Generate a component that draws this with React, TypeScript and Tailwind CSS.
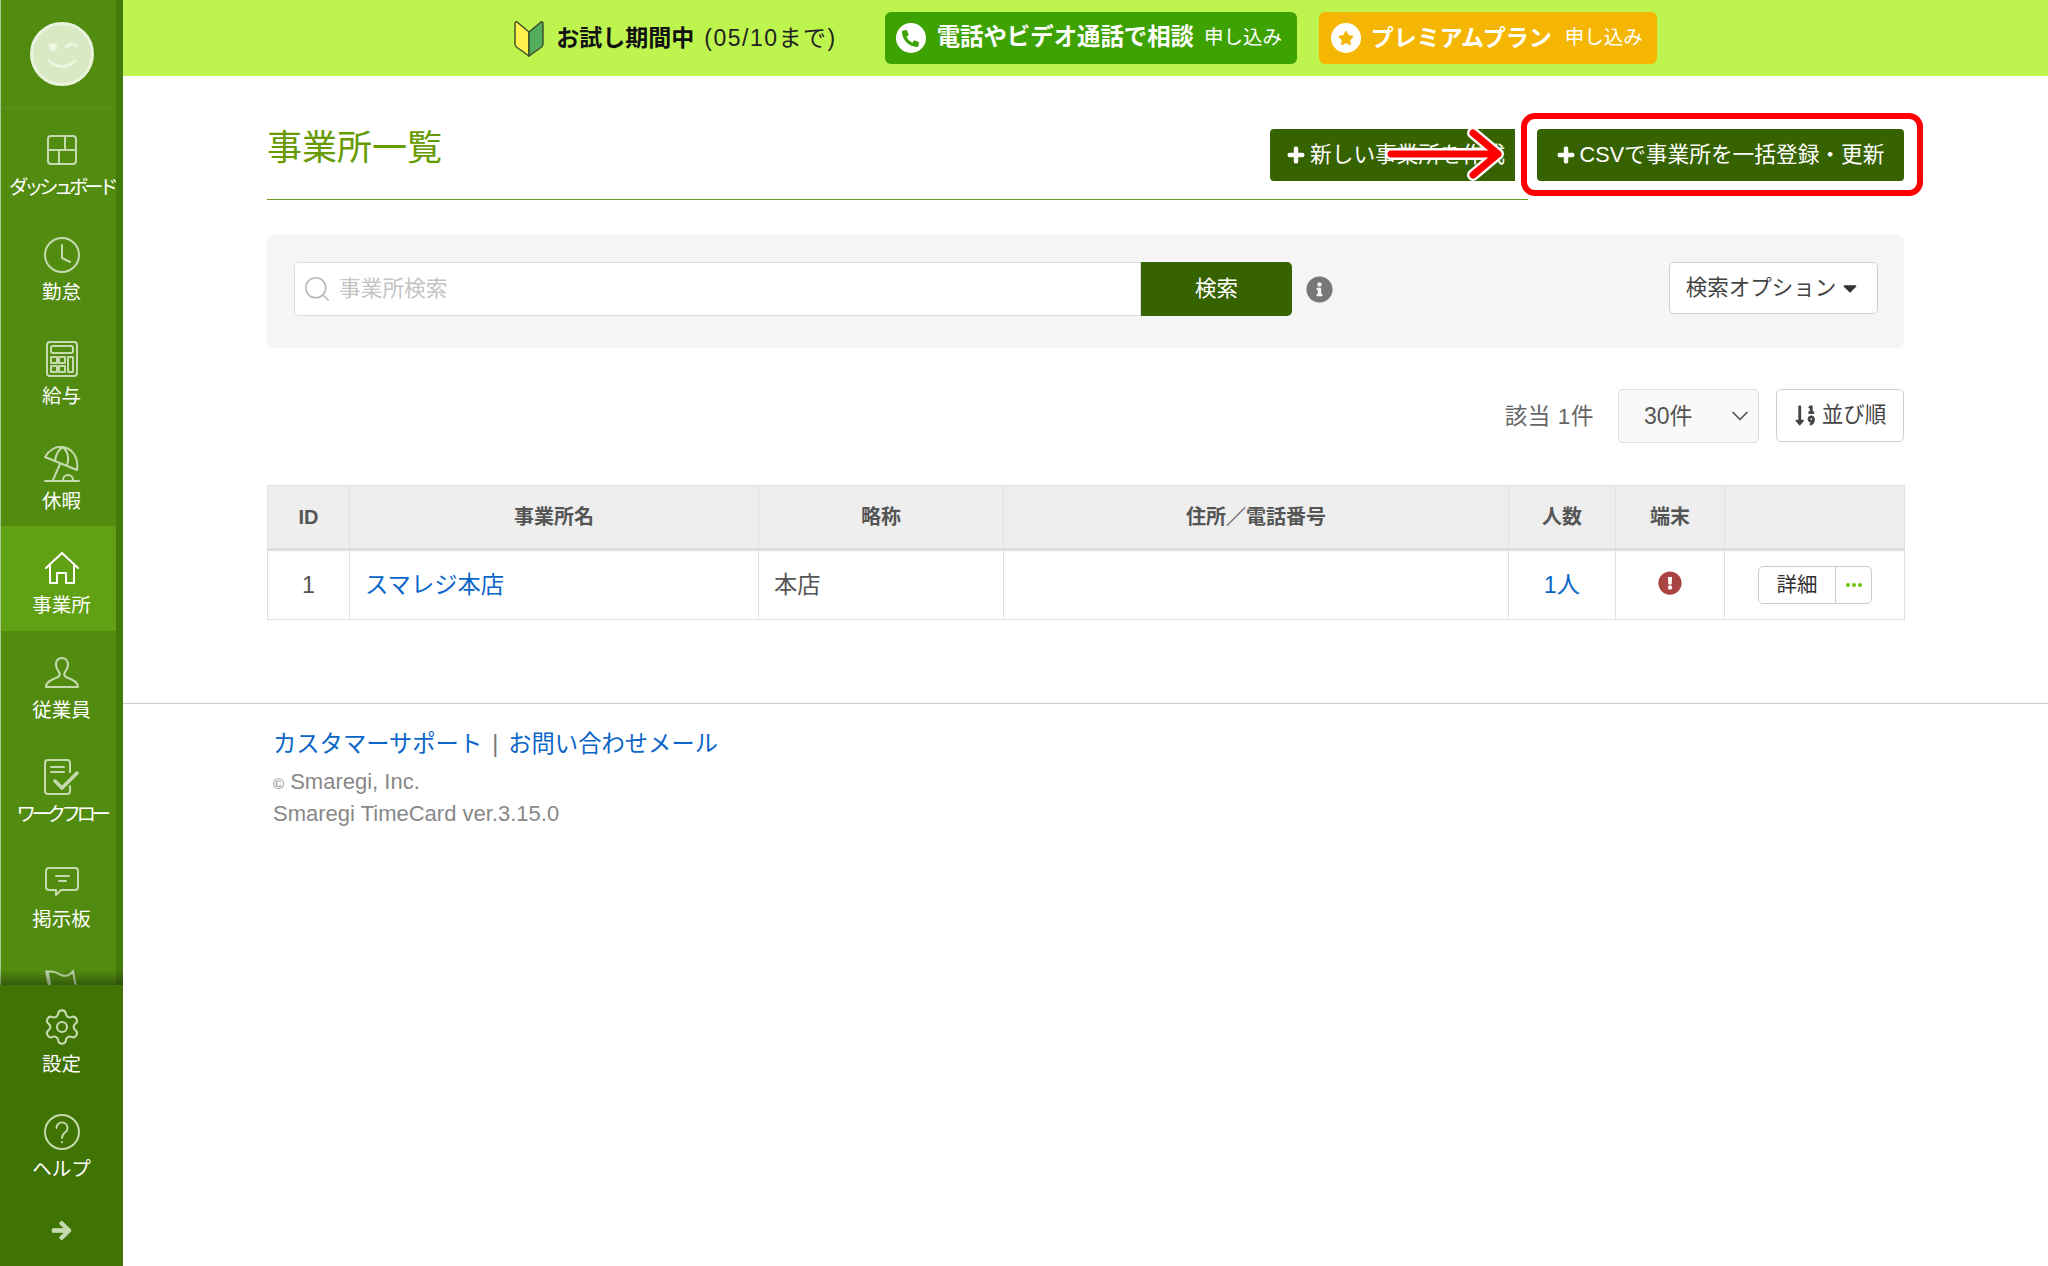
import type { ReactNode } from "react";
import { ChevronDown, Search, Settings } from "lucide-react";
import {
  FaArrowRight,
  FaCaretDown,
  FaExclamationCircle,
  FaInfoCircle,
  FaPhoneAlt,
  FaPlus,
  FaSortNumericDown,
  FaStar,
} from "react-icons/fa";

function Svg({ w, h, children }: { w: number; h: number; children: ReactNode }) {
  return (
    <svg width={w} height={h} viewBox={`0 0 ${w} ${h}`} fill="none" stroke="currentColor" strokeWidth="2" strokeLinecap="round" strokeLinejoin="round">
      {children}
    </svg>
  );
}

const icons: Record<string, ReactNode> = {
  dashboard: (
    <Svg w={30} h={30}>
      <rect x="1" y="1" width="28" height="28" rx="3" />
      <path d="M1 15H29M18 1V15M12 15V29" />
    </Svg>
  ),
  clock: (
    <Svg w={36} h={36}>
      <circle cx="18" cy="18" r="17" />
      <path d="M18 8V21L26 25" />
    </Svg>
  ),
  calc: (
    <Svg w={32} h={36}>
      <rect x="1" y="1" width="30" height="34" rx="3" />
      <rect x="5" y="5" width="22" height="7" rx="2" />
      <rect x="5" y="16" width="6" height="6" />
      <rect x="13" y="16" width="6" height="6" />
      <rect x="5" y="25" width="6" height="6" />
      <rect x="13" y="25" width="6" height="6" />
      <rect x="22" y="16" width="5" height="15" />
    </Svg>
  ),
  umbrella: (
    <Svg w={36} h={36}>
      <path d="M1 11L33 24C35 12 29 3 19 1C12 0 5 4 1 11Z" />
      <path d="M11 15C12 8 15 3 19 1C24 6 25 13 23 19" />
      <path d="M16 18L9 34M1 35H35" />
      <path d="M19 34A5 5 0 1 1 29 34" />
    </Svg>
  ),
  home: (
    <Svg w={34} h={33}>
      <path d="M1 16L17 1L33 16" />
      <path d="M5 12V31H12V21H21V31H29V12" />
    </Svg>
  ),
  person: (
    <Svg w={34} h={31}>
      <path d="M1 30H33C33 24 25 22 21 20C19 19 19 17 20 15C22 12 23 10 23 8C23 3 20 1 17 1C13 1 11 3 11 8C11 10 12 12 14 15C15 17 15 19 13 20C9 22 1 24 1 30Z" />
    </Svg>
  ),
  workflow: (
    <Svg w={35} h={36}>
      <path d="M26 13V4A3 3 0 0 0 23 1H4A3 3 0 0 0 1 4V32A3 3 0 0 0 4 35H23A3 3 0 0 0 26 32V27" />
      <path d="M7 8H20M7 13H20" />
      <path d="M11 22L18 29L33 14" strokeWidth="3.5" />
    </Svg>
  ),
  message: (
    <Svg w={34} h={30}>
      <path d="M4 1H30A3 3 0 0 1 33 4V20A3 3 0 0 1 30 23H16L11 28V23H4A3 3 0 0 1 1 20V4A3 3 0 0 1 4 1Z" />
      <path d="M11 9H24M14 14H21" />
    </Svg>
  ),
  flag: (
    <Svg w={36} h={38}>
      <path d="M3 5L9 36" strokeWidth="3.5" />
      <path d="M3 5C10 3 13 6 17 8C22 10 27 8 29 4L35 36" />
    </Svg>
  ),
  gear: <Settings size={40} strokeWidth={1.25} />,
  help: (
    <Svg w={36} h={36}>
      <circle cx="18" cy="18" r="17" />
      <path d="M12.5 14A5.5 5.5 0 1 1 21 18.5C19 20 18 21 18 24" strokeWidth="1.8" />
      <path d="M18 28V28.2" />
    </Svg>
  ),
};

function NavItem({ icon, label, active, track = "", inset = "pl-[6px]" }: { icon: string; label: string; active?: boolean; track?: string; inset?: string }) {
  return (
    <a className={`flex h-[104.5px] shrink-0 flex-col items-center pt-[23px] ${inset} ${active ? "bg-[#5fa112] text-white" : "text-[#c6dab0]"}`}>
      <span className="flex h-[38px] items-center justify-center">{icons[icon]}</span>
      <span className={`mt-[6px] whitespace-nowrap text-[19.5px] leading-[24px] text-white ${track}`}>{label}</span>
    </a>
  );
}

function Sidebar() {
  return (
    <aside className="relative flex h-full w-[123px] shrink-0 flex-col border-l border-[#a8c98c] bg-[#518c10]">
      <div className="flex min-h-0 flex-1 flex-col overflow-hidden border-r-[7px] border-[#447a0c]">
        <div className="flex h-[108px] shrink-0 items-center justify-center border-b border-[#5a9526] pl-[6px]">
          <div className="h-[64px] w-[64px] rounded-full border-[3px] border-[#e9f3de] bg-[#d9e9c4] p-[3px]">
            <svg viewBox="0 0 52 52" className="h-full w-full" fill="none" stroke="#eef6e4" strokeWidth="2.6" strokeLinecap="round">
              <circle cx="17" cy="19" r="4" fill="#eef6e4" stroke="none" />
              <path d="M30 19Q35 14 40 18" />
              <path d="M13 33Q26 44 39 33" />
            </svg>
          </div>
        </div>
        <NavItem icon="dashboard" label="ダッシュボード" track="tracking-[-4.5px]" />
        <NavItem icon="clock" label="勤怠" />
        <NavItem icon="calc" label="給与" />
        <NavItem icon="umbrella" label="休暇" />
        <NavItem icon="home" label="事業所" active />
        <NavItem icon="person" label="従業員" />
        <NavItem icon="workflow" label="ワークフロー" track="tracking-[-4.5px]" />
        <NavItem icon="message" label="掲示板" />
        <NavItem icon="flag" label="" />
      </div>
      <div className="relative -ml-px shrink-0 bg-[#3f7304]">
        <div className="absolute -top-[15px] left-0 h-[15px] w-full bg-gradient-to-b from-transparent to-black/35" />
        <NavItem icon="gear" label="設定" inset="" />
        <NavItem icon="help" label="ヘルプ" inset="" />
        <div className="flex h-[72px] items-center justify-center text-[#c6dab0]">
          <FaArrowRight size={21} stroke="currentColor" strokeWidth={30} />
        </div>
      </div>
    </aside>
  );
}

function Topbar() {
  return (
    <header className="flex h-[76px] shrink-0 items-center justify-center bg-[#bdf54e]">
      <svg width="30" height="37" viewBox="0 0 30 37" className="mr-[12px]">
        <path d="M15 12L3 2Q1 1 1 4V24Q1 26 3 27.5L15 36Z" fill="#fff04e" stroke="#3c4a2a" strokeWidth="1.4" strokeLinejoin="round" />
        <path d="M15 12L27 2Q29 1 29 4V24Q29 26 27 27.5L15 36Z" fill="#52ae5c" stroke="#3c4a2a" strokeWidth="1.4" strokeLinejoin="round" />
      </svg>
      <span className="text-[23px] font-bold text-[#111]">お試し期間中</span>
      <span className="ml-[10px] text-[23px] tracking-[1.5px] text-[#222]">(05/10まで)</span>
      <a className="ml-[48px] flex h-[52px] w-[412px] items-center rounded-[6px] bg-[#3ea302] pl-[11px] text-white">
        <span className="flex h-[30px] w-[30px] items-center justify-center rounded-full bg-white text-[#3ea302]">
          <FaPhoneAlt size={17} />
        </span>
        <span className="ml-[11px] whitespace-nowrap text-[23.4px] font-bold">電話やビデオ通話で相談</span>
        <span className="ml-[10px] whitespace-nowrap text-[19.5px]">申し込み</span>
      </a>
      <a className="ml-[22px] flex h-[52px] w-[338px] items-center rounded-[6px] bg-[#f5b602] pl-[12px] text-white">
        <span className="flex h-[30px] w-[30px] items-center justify-center rounded-full bg-white text-[#f5b602]">
          <FaStar size={16} />
        </span>
        <span className="ml-[10px] whitespace-nowrap text-[23px] font-bold">プレミアムプラン</span>
        <span className="ml-[13px] whitespace-nowrap text-[19.5px]">申し込み</span>
      </a>
    </header>
  );
}

function PageHead() {
  return (
    <div className="relative">
      <div className="flex h-[70px] items-start justify-between">
        <h1 className="text-[35px] leading-[38px] text-[#669a00]">事業所一覧</h1>
        <div className="flex gap-[22px]">
          <a className="flex h-[52px] w-[245px] items-center overflow-hidden rounded-l-[4px] bg-[#376200] pl-[17px] text-[21.7px] whitespace-nowrap text-white">
            <FaPlus size={18} stroke="currentColor" strokeWidth={30} className="mr-[5px] shrink-0" />
            新しい事業所を作成
          </a>
          <a className="flex h-[52px] w-[367px] items-center justify-center rounded-[4px] bg-[#376200] text-[21.7px] whitespace-nowrap text-white">
            <FaPlus size={18} stroke="currentColor" strokeWidth={30} className="mr-[5px] shrink-0" />
            CSVで事業所を一括登録・更新
          </a>
        </div>
      </div>
      <div className="h-px w-[1261px] bg-[#6c9a1a]" />
      {/* annotation drawn over the page */}
      <div className="absolute -top-[16px] left-[1254px] h-[83px] w-[402px] rounded-[14px] border-[6px] border-[#ff0000]" />
      <svg width="125" height="58" viewBox="0 0 125 58" fill="none" strokeLinecap="round" strokeLinejoin="round" className="absolute -top-[4px] left-[1116px]">
        <path d="M8 29H115M90 8L115 29L90 50" stroke="#fff" strokeWidth="12" />
        <path d="M8 29H115M90 8L115 29L90 50" stroke="#ff0000" strokeWidth="7" />
      </svg>
    </div>
  );
}

function SearchPanel() {
  return (
    <div className="mt-[35px] flex h-[113px] items-start rounded-[6px] bg-[#f5f5f5] pt-[27px] pr-[26px] pl-[27px]">
      <div className="flex h-[54px] w-[847px] items-center rounded-l-[5px] border border-[#dcdcdc] bg-white pl-[7px]">
        <Search size={30} strokeWidth={1.3} className="shrink-0 text-[#bbbbbb]" />
        <input
          placeholder="事業所検索"
          className="ml-[7px] w-full bg-transparent text-[21.7px] outline-none placeholder:text-[#c4c4c4]"
        />
      </div>
      <button type="button" className="h-[54px] w-[151px] rounded-r-[5px] bg-[#376200] text-[21.5px] text-white">
        検索
      </button>
      <FaInfoCircle size={27} className="mt-[14px] ml-[14px] text-[#777777]" />
      <button type="button" className="ml-auto flex h-[52px] w-[209px] items-center justify-center rounded-[5px] border border-[#d0d0d0] bg-white text-[21.5px] text-[#444]">
        検索オプション
        <FaCaretDown size={22} className="ml-[3px] text-[#333]" />
      </button>
    </div>
  );
}

function ResultBar() {
  return (
    <div className="mt-[41px] flex h-[54px] items-start justify-end">
      <span className="mt-[15px] text-[22.5px] leading-[26px] tracking-[0.6px] text-[#666]">該当 1件</span>
      <div className="ml-[24px] flex h-[54px] w-[141px] items-center justify-between rounded-[5px] border border-[#dddddd] bg-[#f9f9f9] pr-[4px] pl-[25px] text-[23px] text-[#555]">
        30件
        <ChevronDown size={28} strokeWidth={1.5} className="text-[#555]" />
      </div>
      <button type="button" className="ml-[17px] flex h-[53px] w-[128px] items-center justify-center rounded-[5px] border border-[#d0d0d0] bg-white text-[21.5px] text-[#444]">
        <FaSortNumericDown size={23} className="mr-[5px] text-[#444]" />
        並び順
      </button>
    </div>
  );
}

function OfficeTable() {
  const th = "border-x border-[#e0e0e0] text-center text-[20px] font-bold text-[#555]";
  const td = "border-x border-[#e0e0e0] text-[23.3px]";
  return (
    <table className="mt-[42px] w-[1637px] table-fixed border-collapse border border-[#e0e0e0]">
      <thead>
        <tr className="h-[64px] border-b-[3px] border-[#dddddd] bg-[#eeeeee]">
          <th className={`${th} w-[82px]`}>ID</th>
          <th className={`${th} w-[409px]`}>事業所名</th>
          <th className={`${th} w-[245px]`}>略称</th>
          <th className={`${th} w-[505px]`}>住所／電話番号</th>
          <th className={`${th} w-[107px]`}>人数</th>
          <th className={`${th} w-[109px]`}>端末</th>
          <th className={`${th} w-[180px]`} />
        </tr>
      </thead>
      <tbody>
        <tr className="h-[70px]">
          <td className={`${td} text-center text-[#555]`}>1</td>
          <td className={`${td} pl-[15px] text-[#0a66c8]`}>スマレジ本店</td>
          <td className={`${td} pl-[15px] text-[#555]`}>本店</td>
          <td className={td} />
          <td className={`${td} text-center text-[#0a66c8]`}>1人</td>
          <td className={td}>
            <FaExclamationCircle size={24} className="mx-auto mb-[4px] text-[#a94442]" />
          </td>
          <td className={td}>
            <div className="ml-[33px] flex h-[38px] w-[114px] items-center rounded-[5px] border border-[#cccccc] bg-white">
              <span className="w-[77px] border-r border-[#cccccc] text-center text-[20.5px] leading-[36px] text-[#333]">詳細</span>
              <span className="flex flex-1 justify-center gap-[2px]">
                <i className="h-[4px] w-[4px] rounded-full bg-[#6cc20a]" />
                <i className="h-[4px] w-[4px] rounded-full bg-[#6cc20a]" />
                <i className="h-[4px] w-[4px] rounded-full bg-[#6cc20a]" />
              </span>
            </div>
          </td>
        </tr>
      </tbody>
    </table>
  );
}

function Footer() {
  return (
    <footer className="mt-[83px] border-t border-[#cccccc] pt-[24px] pl-[150px]">
      <div className="text-[23.3px] leading-[32px] text-[#0a66c8]">
        <a>カスタマーサポート</a>
        <span className="mx-[10px] text-[#777]">|</span>
        <a>お問い合わせメール</a>
      </div>
      <p className="mt-[7px] text-[22px] leading-[30px] text-[#888]">
        <span className="text-[15px]">©</span> Smaregi, Inc.
      </p>
      <p className="text-[22px] leading-[30px] text-[#888]">Smaregi TimeCard ver.3.15.0</p>
    </footer>
  );
}

export default function App() {
  return (
    <div className="flex h-[1266px] w-[2048px] overflow-hidden bg-white [font-family:'Liberation_Sans','Noto_Sans_CJK_JP',sans-serif]">
      <Sidebar />
      <div className="flex min-w-0 flex-1 flex-col">
        <Topbar />
        <main className="px-[144px] pt-[53px]">
          <PageHead />
          <SearchPanel />
          <ResultBar />
          <OfficeTable />
        </main>
        <Footer />
      </div>
    </div>
  );
}
